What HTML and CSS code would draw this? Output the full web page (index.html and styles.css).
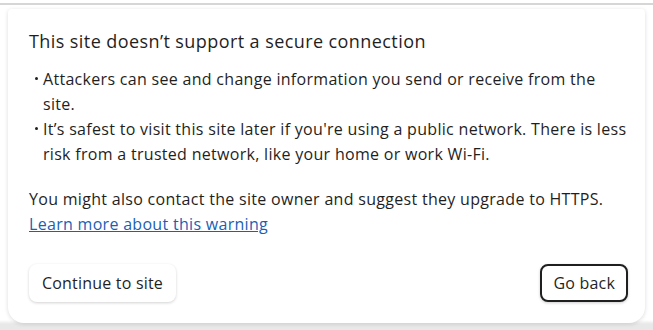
FILE: index.html
```html
<!DOCTYPE html>
<html lang="en">
<head>
<meta charset="utf-8">
<link rel="stylesheet" href="styles.css">
</head>
<body>
<div class="topline"></div>
<div class="card">
  <h1 class="title">This site doesn’t support a secure connection</h1>
  <ul class="points">
    <li>Attackers can see and change information you send or receive from the site.</li>
    <li>It’s safest to visit this site later if you're using a public network. There is less risk from a trusted network, like your home or work Wi-Fi.</li>
  </ul>
  <p class="note">You might also contact the site owner and suggest they upgrade to HTTPS.<br><a class="link" href="#">Learn more about this warning</a></p>
  <div class="actions">
    <button class="btn btn-soft">Continue to site</button>
    <button class="btn btn-outline">Go back</button>
  </div>
</div>
</body>
</html>
```
FILE: styles.css
```css
html, body {
  margin: 0;
  padding: 0;
  background: #ffffff;
  font-family: "Open Sans", "Noto Sans", sans-serif;
  color: #1f1f1f;
}
body {
  height: 330px;
  overflow: hidden;
  background: linear-gradient(#ffffff 0, #ffffff 320px, #e8e8e8 324px);
}
.topline {
  height: 3px;
  border-bottom: 2px solid #d6d6d6;
}
.card {
  margin: 4px 8px 0 8px;
  background: #ffffff;
  border-radius: 4px 4px 16px 16px;
  box-shadow: 0 1px 4px rgba(0,0,0,0.14);
  padding: 20px 17px 20px 21px;
  height: 274px;
}
.title {
  margin: 0;
  font-size: 18px;
  font-weight: 400;
  line-height: 24px;
  letter-spacing: 0.42px;
}
.points {
  list-style: none;
  margin: 14px 0 0 0;
  padding: 0;
  font-size: 16px;
  line-height: 25px;
  letter-spacing: 0.3px;
}
.points li {
  position: relative;
  padding-left: 14px;
}
.points li::before {
  content: "";
  position: absolute;
  left: 6px;
  top: 10px;
  width: 3px;
  height: 3px;
  border-radius: 50%;
  background: #1f1f1f;
}
.note {
  margin: 20px 0 0 0;
  font-size: 16px;
  line-height: 25px;
  letter-spacing: 0.3px;
}
.link {
  color: #1a5fb4;
  text-decoration: underline;
}
.actions {
  display: flex;
  justify-content: space-between;
  align-items: center;
  margin-top: 27px;
}
.btn {
  font-family: inherit;
  font-size: 16px;
  letter-spacing: 0.2px;
  color: #1f1f1f;
  background: #ffffff;
  height: 38px;
  border-radius: 8px;
  cursor: pointer;
}
.btn-soft {
  border: none;
  padding: 0 13px;
  box-shadow: 0 1px 3px rgba(0,0,0,0.18);
}
.btn-outline {
  border: 2px solid #1f1f1f;
  padding: 0 11px;
  box-shadow: 0 1px 3px rgba(0,0,0,0.2);
}
```
